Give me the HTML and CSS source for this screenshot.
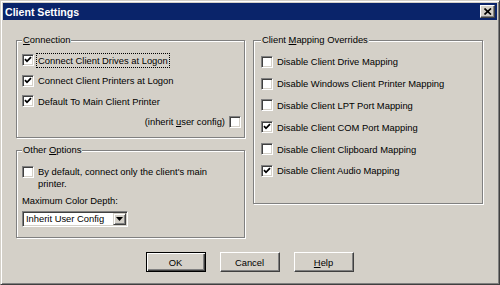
FILE: index.html
```html
<!DOCTYPE html>
<html lang="en">
<head>
    <meta charset="UTF-8">
    <title>Client Settings</title>
    <link rel="stylesheet" href="styles.css">
</head>
<body>
    <div class="window">
        <div class="titlebar">
            <span class="title">Client Settings</span>
            <button class="close-btn" aria-label="Close">
                <svg width="8" height="7" viewBox="0 0 8 7">
                    <path d="M0.5 0.5 L7 6.5 M7 0.5 L0.5 6.5" stroke="#000" stroke-width="1.7" fill="none"/>
                </svg>
            </button>
        </div>

        <div class="content">
            <div class="columns">
                <div class="col-left">
                    <fieldset class="group connection">
                        <legend><u>C</u>onnection</legend>
                        <div class="check-row">
                            <span class="check on"></span>
                            <span class="focus">Connect Client Drives at Logon</span>
                        </div>
                        <div class="check-row">
                            <span class="check on"></span>
                            <span>Connect Client Printers at Logon</span>
                        </div>
                        <div class="check-row">
                            <span class="check on"></span>
                            <span>Default To Main Client Printer</span>
                        </div>
                        <div class="check-row right">
                            <span>(inherit <u>u</u>ser config)</span>
                            <span class="check"></span>
                        </div>
                    </fieldset>

                    <fieldset class="group other">
                        <legend>Other <u>O</u>ptions</legend>
                        <div class="check-row wrap">
                            <span class="check"></span>
                            <span class="wrap-text">By default, connect only the client's main printer.</span>
                        </div>
                        <div class="field-label">Maximum Color Depth:</div>
                        <div class="select">
                            <span class="select-value">Inherit User Config</span>
                            <span class="select-arrow">
                                <svg width="7" height="4" viewBox="0 0 7 4"><path d="M0 0 H7 L3.5 4 Z" fill="#000"/></svg>
                            </span>
                        </div>
                    </fieldset>
                </div>

                <fieldset class="group overrides">
                    <legend>Client <u>M</u>apping Overrides</legend>
                    <div class="check-row"><span class="check"></span><span>Disable Client Drive Mapping</span></div>
                    <div class="check-row"><span class="check"></span><span>Disable Windows Client Printer Mapping</span></div>
                    <div class="check-row"><span class="check"></span><span>Disable Client LPT Port Mapping</span></div>
                    <div class="check-row"><span class="check on"></span><span>Disable Client COM Port Mapping</span></div>
                    <div class="check-row"><span class="check"></span><span>Disable Client Clipboard Mapping</span></div>
                    <div class="check-row"><span class="check on"></span><span>Disable Client Audio Mapping</span></div>
                </fieldset>
            </div>

            <div class="buttons">
                <button class="btn default">OK</button>
                <button class="btn">Cancel</button>
                <button class="btn"><u>H</u>elp</button>
            </div>
        </div>
    </div>
</body>
</html>
```

FILE: styles.css
```css
* {
    box-sizing: border-box;
}

body {
    margin: 0;
    background-color: #d4d0c8;
    font-family: "Liberation Sans", Arial, sans-serif;
    font-size: 9.4px;
    color: #000;
}

.window {
    width: 500px;
    height: 285px;
    background-color: #d4d0c8;
    border: 1px solid;
    border-color: #d4d0c8 #404040 #404040 #d4d0c8;
    box-shadow: inset 1px 1px #fff, inset -1px -1px #808080;
    padding: 2px;
}

.titlebar {
    height: 17px;
    background-color: #0a246a;
    color: #fff;
    display: flex;
    align-items: center;
    justify-content: space-between;
    padding: 0 2px 0 2px;
}

.title {
    font-weight: bold;
    font-size: 10.6px;
}

.close-btn {
    width: 15px;
    height: 13px;
    padding: 0;
    background-color: #d4d0c8;
    border: 1px solid;
    border-color: #fff #404040 #404040 #fff;
    box-shadow: inset -1px -1px #808080;
    display: flex;
    align-items: center;
    justify-content: center;
}

.content {
    padding: 14px 14px 0 13px;
}

.columns {
    display: flex;
    gap: 8px;
}

.col-left {
    width: 229px;
    display: flex;
    flex-direction: column;
    gap: 6px;
}

.group {
    margin: 0;
    min-width: 0;
    border: 1px solid #808080;
    box-shadow: inset 1px 1px #fff, 1px 1px #fff;
}

.group legend {
    margin-left: 0;
    padding: 0 1px;
    line-height: 12px;
    background-color: #d4d0c8;
}

.connection {
    height: 104px;
    padding: 4px 3px 0 5px;
}

.other {
    height: 94px;
    padding: 10px 3px 0 5px;
}

.overrides {
    width: 230px;
    height: 170px;
    padding: 5px 3px 0 7px;
}

.check-row {
    display: flex;
    align-items: center;
    gap: 4px;
    height: 20.5px;
}

.overrides .check-row {
    height: 21.8px;
}

.check-row.right {
    justify-content: flex-end;
}

.check-row.wrap {
    height: auto;
    align-items: flex-start;
    line-height: 12px;
}

.check {
    flex: none;
    width: 12px;
    height: 12px;
    background-color: #fff;
    border: 1px solid;
    border-color: #808080 #fff #fff #808080;
    box-shadow: inset 1px 1px #404040, inset -1px -1px #d4d0c8;
}

.check.on {
    background-image: url("data:image/svg+xml,%3Csvg xmlns='http://www.w3.org/2000/svg' width='10' height='10' viewBox='0 0 10 10'%3E%3Cpath d='M2 4.2 L4 6.3 L8 2.2' stroke='%23000' stroke-width='1.8' fill='none'/%3E%3C/svg%3E");
    background-repeat: no-repeat;
}

.focus {
    outline: 1px dotted #000;
    outline-offset: 1px;
}

.wrap-text {
    max-width: 185px;
}

.field-label {
    margin-top: 5px;
    line-height: 12px;
}

.select {
    margin-top: 4px;
    width: 106px;
    height: 16px;
    display: flex;
    background-color: #fff;
    border: 1px solid;
    border-color: #808080 #fff #fff #808080;
    box-shadow: inset 1px 1px #404040, inset -1px -1px #d4d0c8;
    padding: 1px;
}

.select-value {
    flex: 1;
    padding-left: 2px;
    line-height: 12px;
}

.select-arrow {
    width: 13px;
    background-color: #d4d0c8;
    border: 1px solid;
    border-color: #d4d0c8 #404040 #404040 #d4d0c8;
    box-shadow: inset 1px 1px #fff, inset -1px -1px #808080;
    display: flex;
    align-items: center;
    justify-content: center;
}

.buttons {
    display: flex;
    justify-content: center;
    gap: 14px;
    margin-top: 14px;
}

.btn {
    width: 60px;
    height: 20px;
    padding: 0;
    font-family: inherit;
    font-size: 9.4px;
    color: #000;
    background-color: #d4d0c8;
    border: 1px solid;
    border-color: #fff #404040 #404040 #fff;
    box-shadow: inset -1px -1px #808080;
}

.btn.default {
    border: 1px solid #000;
    box-shadow: inset 1px 1px #fff, inset -1px -1px #404040, inset -2px -2px #808080;
}
```
